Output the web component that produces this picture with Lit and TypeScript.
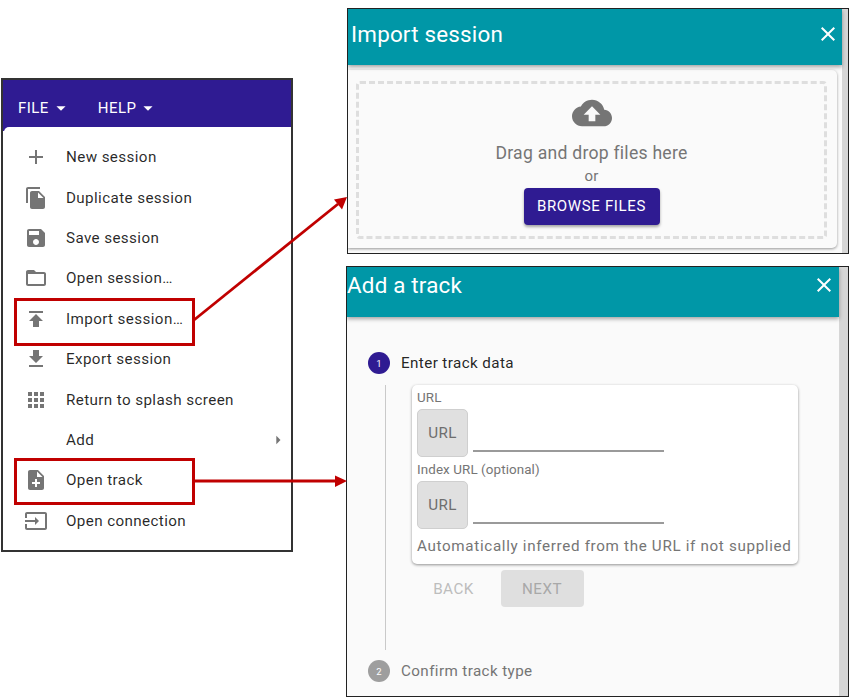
import { LitElement, html, css, svg } from "lit";
import { customElement } from "lit/decorators.js";

const P: Record<string, string> = {
  add: "M19 13h-6v6h-2v-6H5v-2h6V5h2v6h6v2z",
  copy: "M16 1H4c-1.1 0-2 .9-2 2v14h2V3h12V1zm-1 4l6 6v10c0 1.1-.9 2-2 2H7.99C6.89 23 6 22.1 6 21l.01-14c0-1.1.89-2 1.99-2h7zm-1 7h5.5L14 6.5V12z",
  save: "M17 3H5c-1.11 0-2 .9-2 2v14c0 1.1.89 2 2 2h14c1.1 0 2-.9 2-2V7l-4-4zm-5 16c-1.66 0-3-1.34-3-3s1.34-3 3-3 3 1.34 3 3-1.34 3-3 3zm3-10H5V5h10v4z",
  folder: "M20 6h-8l-2-2H4c-1.1 0-1.99.9-1.99 2L2 18c0 1.1.9 2 2 2h16c1.1 0 2-.9 2-2V8c0-1.1-.9-2-2-2zm0 12H4V8h16v10z",
  publish: "M5 4v2h14V4H5zm0 10h4v6h6v-6h4l-7-7-7 7z",
  getapp: "M19 9h-4V3H9v6H5l7 7 7-7zM5 18v2h14v-2H5z",
  apps: "M4 8h4V4H4v4zm6 12h4v-4h-4v4zm-6 0h4v-4H4v4zm0-6h4v-4H4v4zm6 0h4v-4h-4v4zm6-10v4h4V4h-4zm-6 4h4V4h-4v4zm6 6h4v-4h-4v4zm0 6h4v-4h-4v4z",
  note: "M14 2H6c-1.1 0-1.99.9-1.99 2L4 20c0 1.1.89 2 1.99 2H18c1.1 0 2-.9 2-2V8l-6-6zm2 14h-3v3h-2v-3H8v-2h3v-3h2v3h3v2zm-3-7V3.5L18.5 9H13z",
  input: "M21 3.01H3c-1.1 0-2 .9-2 2V9h2V4.99h18v14.03H3V15H1v4.01c0 1.1.9 1.98 2 1.98h18c1.1 0 2-.88 2-1.98v-14c0-1.1-.9-2-2-2zM11 16l4-4-4-4v3H1v2h10v3z",
  cloud: "M19.35 10.04C18.67 6.59 15.64 4 12 4 9.11 4 6.6 5.64 5.35 8.04 2.34 8.36 0 10.91 0 14c0 3.31 2.69 6 6 6h13c2.76 0 5-2.24 5-5 0-2.64-2.05-4.78-4.65-4.96zM14 13v4h-4v-4H7l5-5 5 5h-3z",
  close: "M19 6.41L17.59 5 12 10.59 6.41 5 5 6.41 10.59 12 5 17.59 6.41 19 12 13.41 17.59 19 19 17.59 13.41 12z",
  drop: "M7 10l5 5 5-5z",
  right: "M10 17l5-5-5-5v10z",
};

const icon = (name: string, size = 24) => html`<svg class="ic" width=${size} height=${size} viewBox="0 0 24 24" fill="currentColor">${svg`<path d=${P[name]}></path>`}</svg>`;

const ITEMS: [string | null, string, boolean?][] = [
  ["add", "New session"],
  ["copy", "Duplicate session"],
  ["save", "Save session"],
  ["folder", "Open session…"],
  ["publish", "Import session…"],
  ["getapp", "Export session"],
  ["apps", "Return to splash screen"],
  [null, "Add", true],
  ["note", "Open track"],
  ["input", "Open connection"],
];

@customElement("app-root")
export class AppRoot extends LitElement {
  static styles = css`
    :host { display: block; position: relative; width: 850px; height: 697px; background: #fff; overflow: hidden;
      font-family: Roboto, "Liberation Sans", sans-serif; color: rgba(0,0,0,.87); }
    .ic { display: block; flex: none; }
    .win { position: absolute; box-sizing: border-box; border: 1.5px solid #222; display: flex; flex-direction: column; overflow: hidden; background: #fafafa; }

    .appwin { left: 1px; top: 78px; width: 292px; height: 474px; background: #fff; border: 2px solid #333; }
    .bar { height: 51px; flex: none; background: #2f1b92; color: #fff; display: flex; align-items: center; padding: 4px 0 0 15px; gap: 26px; box-sizing: border-box; }
    .mbtn { display: flex; align-items: center; font-size: 15px; letter-spacing: .45px; }
    .mbtn .ic { margin-left: 1px; }
    .menu { flex: 1; margin: -4px 0 0 1px; background: #fff; border-radius: 5px 0 0 0; padding-top: 10px; position: relative; }
    .item { height: 40.4px; display: flex; align-items: center; padding: 0 3px 0 20px; font-size: 15.2px; letter-spacing: .39px; color: rgba(0,0,0,.85); }
    .item .slot { width: 24px; height: 24px; margin-right: 18px; flex: none; color: #757575; }
    .item .sub { margin-left: auto; color: #757575; }

    .dlgbar { flex: none; background: #0097a7; color: #fff; display: flex; align-items: center; justify-content: space-between; box-shadow: 0 2px 4px rgba(0,0,0,.35); position: relative; box-sizing: border-box; }
    .dlgbar h2 { margin: 0; font-weight: 400; font-size: 22.4px; letter-spacing: .2px; }
    .dlgmain { display: flex; flex: 1; min-height: 0; }
    .dlgcol { flex: 1; min-width: 0; display: flex; flex-direction: column; }
    .scroll { flex: none; background: #d6d6d6; }

    .import { left: 347px; top: 8px; width: 502px; height: 246px; }
    .import .dlgbar { height: 56px; padding: 0 2px 6px 3px; }
    .import .scroll { width: 6px; }
    .card { margin: 4.5px 5px 5px 0; flex: 1; background: #fafafa; border-radius: 0 5px 5px 0; box-shadow: 0 1px 3px rgba(0,0,0,.4); padding: 11px 10px 9px 8px; display: flex; }
    .drop { flex: 1; border: 3px dashed #dedede; border-radius: 4px; display: flex; flex-direction: column; align-items: center; color: #757575; padding-top: 9px; box-sizing: border-box; }
    .drop .big { font-size: 17.6px; letter-spacing: .25px; line-height: 24px; margin-top: 8px; }
    .drop .or { font-size: 15px; line-height: 20px; margin-top: 1px; letter-spacing: .3px; }
    .browse { margin-top: 2px; width: 136px; height: 37px; border-radius: 4px; background: #2f1b92; color: #fff; font-size: 15px; letter-spacing: .65px; display: flex; align-items: center; justify-content: center; box-shadow: 0 2px 3px rgba(0,0,0,.35); }

    .track { left: 346px; top: 266px; width: 503px; height: 431px; }
    .track .dlgbar { height: 49.5px; padding: 0 3px 13px 0; }
    .track .scroll { width: 9px; }
    .stepper { flex: 1; display: flex; flex-direction: column; padding: 35.5px 0 0 21px; min-height: 0; }
    .step { display: flex; align-items: center; gap: 11px; font-size: 15.2px; letter-spacing: .4px; height: 22px; }
    .dot { width: 22px; height: 22px; border-radius: 50%; background: #2f1b92; color: #fff; font-size: 9.5px; display: flex; align-items: center; justify-content: center; letter-spacing: 0; }
    .step.off { color: #757575; }
    .step.off .dot { background: #9e9e9e; }
    .stepbody { margin-left: 16.5px; margin-top: 11px; height: 265px; border-left: 1.5px solid #c9c9c9; padding-left: 26px; box-sizing: border-box; margin-bottom: 10px; flex: none; }
    .form { width: 386px; height: 179px; box-sizing: border-box; background: #fff; border-radius: 5px; box-shadow: 0 1px 3px rgba(0,0,0,.42); padding: 5px 6px 0 5.5px; color: #757575; }
    .lab { font-size: 13.4px; line-height: 16px; letter-spacing: .1px; }
    .urlrow { display: flex; align-items: flex-end; gap: 5px; height: 48px; margin-bottom: 5px; margin-top: 3px; }
    .adorn { width: 51px; height: 48px; box-sizing: border-box; background: #e0e0e0; border: 1px solid #cfcfcf; border-radius: 5px; display: flex; align-items: center; justify-content: center; font-size: 15.2px; color: #6e6e6e; letter-spacing: .3px; }
    .line { width: 191px; height: 1.5px; background: #9a9a9a; margin-bottom: 5.5px; }
    .help { font-size: 15.2px; line-height: 18px; letter-spacing: .67px; margin-top: 8px; white-space: nowrap; }
    .actions { display: flex; align-items: center; gap: 8px; margin-top: 6px; margin-left: 3px; font-size: 15.2px; letter-spacing: .5px; }
    .back { width: 78px; height: 37px; color: #bdbdbd; display: flex; align-items: center; justify-content: center; }
    .next { width: 83px; height: 37px; border-radius: 4px; background: #dfdfdf; color: #a8a8a8; display: flex; align-items: center; justify-content: center; }

    .overlay { position: absolute; inset: 0; pointer-events: none; }
  `;

  render() {
    return html`
      <div class="win appwin">
        <div class="bar">
          <div class="mbtn">FILE${icon("drop", 22)}</div>
          <div class="mbtn">HELP${icon("drop", 22)}</div>
        </div>
        <div class="menu">
          ${ITEMS.map(([ic, label, sub]) => html`
            <div class="item">
              <div class="slot">${ic ? icon(ic) : null}</div>
              <span>${label}</span>
              ${sub ? html`<span class="sub">${icon("right", 20)}</span>` : null}
            </div>`)}
        </div>
      </div>

      <div class="win import">
        <div class="dlgmain">
          <div class="dlgcol">
            <div class="dlgbar"><h2>Import session</h2>${icon("close", 24)}</div>
            <div class="card">
              <div class="drop">
                ${icon("cloud", 40)}
                <div class="big">Drag and drop files here</div>
                <div class="or">or</div>
                <div class="browse">BROWSE FILES</div>
              </div>
            </div>
          </div>
          <div class="scroll"></div>
        </div>
      </div>

      <div class="win track">
        <div class="dlgmain">
          <div class="dlgcol">
            <div class="dlgbar"><h2>Add a track</h2>${icon("close", 24)}</div>
            <div class="stepper">
              <div class="step"><div class="dot">1</div>Enter track data</div>
              <div class="stepbody">
                <div class="form">
                  <div class="lab">URL</div>
                  <div class="urlrow"><div class="adorn">URL</div><div class="line"></div></div>
                  <div class="lab">Index URL (optional)</div>
                  <div class="urlrow"><div class="adorn">URL</div><div class="line"></div></div>
                  <div class="help">Automatically inferred from the URL if not supplied</div>
                </div>
                <div class="actions"><div class="back">BACK</div><div class="next">NEXT</div></div>
              </div>
              <div class="step off"><div class="dot">2</div>Confirm track type</div>
            </div>
          </div>
          <div class="scroll"></div>
        </div>
      </div>

      <svg class="overlay" width="850" height="697" viewBox="0 0 850 697">
        <rect x="15.5" y="299.5" width="178" height="45" fill="none" stroke="#c00000" stroke-width="3"></rect>
        <rect x="15.5" y="459.5" width="178" height="44" fill="none" stroke="#c00000" stroke-width="3"></rect>
        <line x1="194" y1="320" x2="338" y2="204" stroke="#c00000" stroke-width="2.8"></line>
        <polygon points="347,197 342,209.5 334,199.5" fill="#c00000"></polygon>
        <line x1="194" y1="481" x2="336" y2="481" stroke="#c00000" stroke-width="2.8"></line>
        <polygon points="347,481 335,475.5 335,487" fill="#c00000"></polygon>
      </svg>
    `;
  }
}
